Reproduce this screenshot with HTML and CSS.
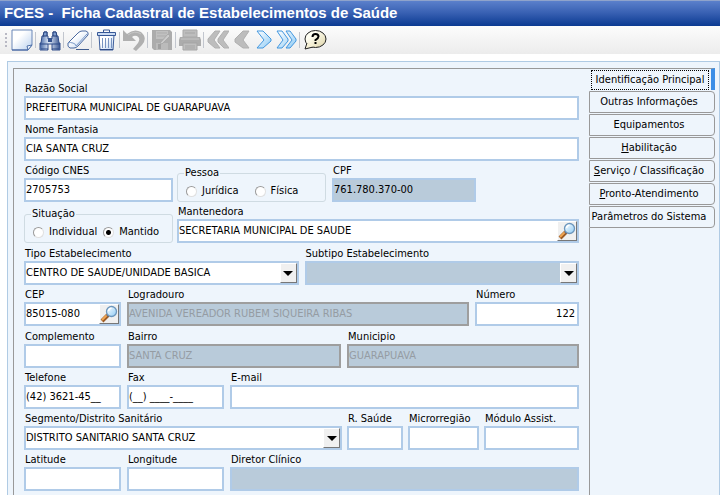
FILE: index.html
```html
<!DOCTYPE html>
<html lang="pt-BR">
<head>
<meta charset="utf-8">
<title>FCES - Ficha Cadastral de Estabelecimentos de Saúde</title>
<link rel="stylesheet" href="styles.css">
</head>
<body>
<svg class="defs" width="0" height="0" aria-hidden="true">
  <defs>
    <linearGradient id="paper" x1="0" y1="0" x2="1" y2="1"><stop offset=".35" stop-color="#fff"/><stop offset="1" stop-color="#b9d0ee"/></linearGradient>
    <linearGradient id="steel" x1="0" y1="0" x2="1" y2="0"><stop offset="0" stop-color="#4567a5"/><stop offset=".45" stop-color="#e4eefb"/><stop offset="1" stop-color="#36538f"/></linearGradient>
    <linearGradient id="cream" x1="0" y1="0" x2="1" y2="1"><stop offset=".3" stop-color="#fffef2"/><stop offset="1" stop-color="#ddd3a6"/></linearGradient>
    <linearGradient id="sky" x1="0" y1="0" x2="1" y2="1"><stop offset="0" stop-color="#fff"/><stop offset="1" stop-color="#8ecbf5"/></linearGradient>
    <symbol id="lens" viewBox="0 0 18 18">
      <path d="M2 16L8 10" stroke="#9b5a24" stroke-width="4"/><path d="M2 15L7 10" stroke="#f0a552" stroke-width="2"/>
      <path d="M7 11L9 9" stroke="#667" stroke-width="2"/>
      <circle cx="11.500" cy="6.500" r="5" fill="url(#sky)" stroke="#6c96bd" stroke-width="1.300"/><path d="M8.500 6q.5-2.500 3-2.700" stroke="#fff" stroke-width="1.500" fill="none"/>
    </symbol>
  </defs>
</svg>
<header class="titlebar"><h1>FCES -&nbsp; Ficha Cadastral de Estabelecimentos de Saúde</h1></header>
<div class="toolbar" role="toolbar" aria-label="Ações">
  <span class="grip"></span>
  <button type="button" aria-label="Novo"><svg viewBox="0 0 22 22"><path d="M1 1h20v15l-4 5H1z" fill="url(#paper)" stroke="#6b87b8"/><path d="M21 16l-5 1 1 4z" fill="#f3f8ff" stroke="#4d6fa8"/><path d="M1 21h16" stroke="#3c5f9e"/></svg></button>
  <i class="sep"></i>
  <button type="button" aria-label="Pesquisar"><svg viewBox="0 0 22 22"><path d="M5 3h3v4h1v3h4V7h1V3h3v4h2l1 7h1v7h-8v-6h-4v6H1v-7h1l1-7h2z" fill="url(#steel)" stroke="#324f8c"/><path d="M5 3h3v4H4zM14 3h3l1 4h-4z" fill="#7d9cce" stroke="#243e78"/><path d="M2 14h6v7H1zM14 14h6l1 7h-7z" fill="url(#steel)"/><path d="M1 15h8M13 15h8M2 20h7M13 20h7" stroke="#2b4987"/><path d="M9 9h4v4H9z" fill="#34528f"/></svg></button>
  <i class="sep"></i>
  <button type="button" aria-label="Apagar"><svg viewBox="0 0 22 22"><path d="M1 14L11 4q2-2 4-2h4q3 1 2 4L11 17q-2 2-4 2H3q-3-1-2-5z" fill="url(#paper)" stroke="#49689f"/><path d="M1 14q2-1 5 0t3 3L20 5" fill="none" stroke="#7c9bca"/><path d="M9 20.500h13" stroke="#405c8f"/></svg></button>
  <i class="sep"></i>
  <button type="button" aria-label="Excluir"><svg viewBox="0 0 22 22"><path d="M4 6h15l-1 15H5z" fill="url(#paper)" stroke="#3f5f9c"/><path d="M2.500 3.500h18v3h-18z" fill="#c9daf2" stroke="#365796"/><path d="M8.500 3V1h6v2" fill="none" stroke="#365796"/><path d="M7.500 9v10M10.500 9v10M13.500 9v10M16.500 9v10" stroke="#7893c1"/><path d="M5 20.500h13" stroke="#2d4a86"/></svg></button>
  <i class="sep"></i>
  <button type="button" aria-label="Desfazer" disabled><svg viewBox="0 0 22 22"><path d="M0 1l4 4q7-6 14-2 7 6 1 13l-6 6-3-2 5-6q3-5-1-7-3-1-5 1l4 4H0z" fill="#b0b0b0"/><path d="M5 6q7-5 13-1" stroke="#c6c6c6" fill="none"/></svg></button>
  <i class="sep"></i>
  <button type="button" aria-label="Salvar" disabled><svg viewBox="0 0 22 22"><path d="M2 1h17l2 2v18H3l-2-2V1z" fill="#acacac"/><path d="M5 2h12v8H5z" fill="#c0c0c0"/><path d="M5 14h12v7H5z" fill="#bbb"/><path d="M7 15h3v5H7z" fill="#a0a0a0"/><path d="M6 4h10M6 7h10" stroke="#adadad"/><path d="M9 14l8-9 2 2-8 8z" fill="#cbcbcb" stroke="#aaa"/></svg></button>
  <i class="sep"></i>
  <button type="button" aria-label="Imprimir" disabled><svg viewBox="0 0 22 22"><path d="M4 1h14v7H4z" fill="#bdbdbd" stroke="#a9a9a9"/><path d="M1 8h20l1 3v6h-4v-3H4v3H0v-6z" fill="#acacac"/><path d="M4 14h14v7H4z" fill="#bebebe" stroke="#a5a5a5"/><path d="M6 4h10M6 17h10M6 19h10" stroke="#a5a5a5"/><path d="M2 10h18" stroke="#c5c5c5"/></svg></button>
  <i class="sep"></i>
  <button type="button" aria-label="Primeiro" disabled><svg viewBox="0 0 22 22"><path d="M8 2h5L7 11l6 8H8L1 13v-3zM17 2h5l-6 9 6 8h-5l-6-6v-3z" fill="#bdbdbd" stroke="#b0b0b0"/></svg></button>
  <button type="button" class="single" aria-label="Anterior" disabled><svg viewBox="0 0 20 22"><path d="M12 2h6l-6 9 6 8h-6l-8-6v-3z" fill="#bdbdbd" stroke="#b0b0b0"/></svg></button>
  <button type="button" class="single" aria-label="Próximo"><svg viewBox="0 0 20 22"><path d="M4 2h6l8 8v2l-8 7H4l7-8z" fill="url(#sky)" stroke="#4397df"/></svg></button>
  <button type="button" aria-label="Último"><svg viewBox="0 0 22 22"><path d="M2 2h5l6 8v2l-6 7H2l6-8zM11 2h4l6 8v2l-6 7h-4l6-8z" fill="url(#sky)" stroke="#4397df"/></svg></button>
  <i class="sep"></i>
  <button type="button" aria-label="Ajuda" class="help"><svg viewBox="0 0 24 22"><ellipse cx="12.500" cy="10" rx="10.500" ry="8.500" fill="url(#cream)" stroke="#222"/><path d="M4 14l-2 6 8-2" fill="#f7f1d6" stroke="#222"/><path d="M5 14l5 3" stroke="#f7f1d6" stroke-width="2"/><path d="M9.500 8q0-3 3-3t3 2.500q0 1.500-3 3.500v1" fill="none" stroke="#000" stroke-width="2"/><path d="M11.500 13h2v2h-2z"/></svg></button>
</div>
<main class="panel">
  <form class="form">
    <div class="group">
      <div class="row"><div class="field"><label for="razao">Razão Social</label><input id="razao" value="PREFEITURA MUNICIPAL DE GUARAPUAVA"></div></div>
      <div class="row"><div class="field"><label for="fantasia">Nome Fantasia</label><input id="fantasia" value="CIA SANTA CRUZ"></div></div>
      <div class="row cols-cnes">
        <div class="field"><label for="cnes">Código CNES</label><input id="cnes" value="2705753"></div>
        <fieldset><legend>Pessoa</legend><div class="radios"><label><input type="radio" name="pessoa">Jurídica</label><label><input type="radio" name="pessoa">Física</label></div></fieldset>
        <div class="field"><label for="cpf">CPF</label><input id="cpf" class="locked" readonly value="761.780.370-00"></div>
      </div>
      <div class="row cols-situacao">
        <fieldset><legend>Situação</legend><div class="radios tight"><label><input type="radio" name="situacao">Individual</label><label><input type="radio" name="situacao" checked>Mantido</label></div></fieldset>
        <div class="field"><label for="mantenedora">Mantenedora</label><div class="box"><input id="mantenedora" value="SECRETARIA MUNICIPAL DE SAUDE"><button type="button" class="lookup" aria-label="Procurar mantenedora"><svg><use href="#lens"/></svg></button></div></div>
      </div>
    </div>
    <div class="group">
      <div class="row cols-tipo">
        <div class="field"><label for="tipo">Tipo Estabelecimento</label><div class="box"><select id="tipo"><option>CENTRO DE SAUDE/UNIDADE BASICA</option></select><span class="arrow"></span></div></div>
        <div class="field"><label for="subtipo">Subtipo Estabelecimento</label><div class="box"><select id="subtipo" class="locked"><option></option></select><span class="arrow"></span></div></div>
      </div>
      <div class="row cols-cep">
        <div class="field"><label for="cep">CEP</label><div class="box"><input id="cep" value="85015-080"><button type="button" class="lookup" aria-label="Procurar CEP"><svg><use href="#lens"/></svg></button></div></div>
        <div class="field"><label for="logradouro">Logradouro</label><input id="logradouro" disabled value="AVENIDA VEREADOR RUBEM SIQUEIRA RIBAS"></div>
        <div class="field"><label for="numero">Número</label><input id="numero" class="number" value="122"></div>
      </div>
    </div>
    <div class="group">
      <div class="row cols-bairro">
        <div class="field"><label for="complemento">Complemento</label><input id="complemento"></div>
        <div class="field"><label for="bairro">Bairro</label><input id="bairro" disabled value="SANTA CRUZ"></div>
        <div class="field"><label for="municipio">Municipio</label><input id="municipio" disabled value="GUARAPUAVA"></div>
      </div>
      <div class="row cols-contato">
        <div class="field"><label for="telefone">Telefone</label><input id="telefone" value="(42) 3621-45__"></div>
        <div class="field"><label for="fax">Fax</label><input id="fax" value="(__) ____-____"></div>
        <div class="field"><label for="email">E-mail</label><input id="email" type="email"></div>
      </div>
      <div class="row cols-segmento">
        <div class="field"><label for="segmento">Segmento/Distrito Sanitário</label><div class="box"><select id="segmento"><option>DISTRITO SANITARIO SANTA CRUZ</option></select><span class="arrow"></span></div></div>
        <div class="field"><label for="rsaude">R. Saúde</label><input id="rsaude"></div>
        <div class="field"><label for="micro">Microrregião</label><input id="micro"></div>
        <div class="field"><label for="modulo">Módulo Assist.</label><input id="modulo"></div>
      </div>
      <div class="row cols-contato">
        <div class="field"><label for="latitude">Latitude</label><input id="latitude"></div>
        <div class="field"><label for="longitude">Longitude</label><input id="longitude"></div>
        <div class="field"><label for="diretor">Diretor Clínico</label><input id="diretor" class="locked" readonly></div>
      </div>
    </div>
  </form>
  <nav class="tabs" aria-label="Seções">
    <button type="button" class="tab current"><span>Identificação Principal</span></button>
    <button type="button" class="tab">Outras Informações</button>
    <button type="button" class="tab">Equipamentos</button>
    <button type="button" class="tab"><u>H</u>abilitação</button>
    <button type="button" class="tab"><u>S</u>erviço / Classificação</button>
    <button type="button" class="tab"><u>P</u>ronto-Atendimento</button>
    <button type="button" class="tab">Parâmetros do Sistema</button>
    <div class="edge"></div>
  </nav>
</main>
</body>
</html>
```
FILE: styles.css
```css
* { box-sizing: border-box; }

body {
  margin: 0;
  background: #fff;
  color: #000;
  font-family: "DejaVu Sans Condensed", "DejaVu Sans", sans-serif;
  font-size: 11px;
}

button, input, select { font: inherit; color: inherit; margin: 0; }

.defs { position: absolute; }

.titlebar {
  height: 26px;
  padding: 0 4px;
  border-top: 1px solid #8fa3cb;
  background: linear-gradient(#5b80cb, #3a62b4 45%, #0b3a92);
}

.titlebar h1 {
  margin: 0;
  color: #fff;
  font-family: "Liberation Sans", sans-serif;
  font-size: 15px;
  line-height: 24px;
  white-space: nowrap;
}

.toolbar {
  display: flex;
  align-items: center;
  height: 28px;
  padding-left: 5px;
  background: linear-gradient(#fcfcfc, #ececec);
}

.toolbar button {
  width: 22px;
  height: 22px;
  padding: 0;
  border: 0;
  background: none;
}

.toolbar button + button { margin-left: 2px; }
.toolbar .single { width: 20px; }
.toolbar .help { width: 24px; }
.toolbar svg { display: block; width: 100%; height: 100%; }

.grip {
  width: 2px;
  height: 14px;
  margin-right: 4px;
  background: repeating-linear-gradient(#b9b9c4 0 2px, transparent 2px 4px);
}

.sep {
  width: 1px;
  height: 16px;
  margin: 0 3px 0 2px;
  background: #c2c6ce;
}

.panel {
  display: flex;
  margin: 7px 0 0 7px;
  padding: 6px 4px 0 5px;
  border: 1px solid #b0cbe4;
  border-bottom: 0;
  background: #eef5fc;
}

.form {
  flex: 1;
  min-width: 0;
  padding: 10px 10px 4px;
  border: solid #999;
  border-width: 1px 0 0 1px;
}

.group + .group { margin-top: 1px; }

.row { display: grid; column-gap: 6px; }
.cols-cnes { grid-template-columns: 149px 151px 144px; column-gap: 4px; }
.cols-situacao { grid-template-columns: 149px 1fr; column-gap: 4px; }
.cols-tipo { grid-template-columns: 1fr 1fr; }
.cols-cep { grid-template-columns: 97px 1fr 104px; }
.cols-bairro { grid-template-columns: 97px 12fr 13fr; }
.cols-contato { grid-template-columns: 97px 97px 1fr; }
.cols-segmento { grid-template-columns: 1fr 56px 71px 95px; column-gap: 5px; }

.field { min-width: 0; }

.field label {
  display: block;
  height: 17px;
  padding-left: 1px;
  line-height: 19px;
  white-space: nowrap;
}

.box { position: relative; }

.field input, .field select {
  display: block;
  width: 100%;
  height: 24px;
  padding: 0 0 2px;
  border: 2px solid #b0cbe8;
  border-radius: 0;
  outline: 0;
  background: #fff;
  appearance: none;
}

.field .locked { background: #b9cbda; }

.field input:disabled {
  border-color: #9e9e9e;
  background: #b9cbda;
  color: #959ca3;
}

.field .number { padding-right: 2px; text-align: right; }

.lookup, .arrow {
  position: absolute;
  top: 2px;
  right: 2px;
  height: 20px;
  border: 1px solid;
  border-color: #fff #777 #777 #fff;
  background: #f0f0f0;
}

.lookup { width: 20px; padding: 0; }
.lookup svg { display: block; width: 18px; height: 18px; }

.arrow {
  display: grid;
  place-items: center;
  width: 17px;
  pointer-events: none;
}

.arrow::before {
  content: "";
  border: 5px solid transparent;
  border-top-color: #000;
  border-bottom: 0;
}

fieldset {
  min-width: 0;
  height: 37px;
  margin: 4px 0 0;
  padding: 0 0 0 8px;
  border: 1px solid #cfdbe2;
  border-radius: 3px;
}

.cols-cnes fieldset { margin-right: 2px; }

legend { margin-left: -2px; padding: 0 1px; line-height: 16px; }

.radios { display: flex; gap: 16px; padding-top: 2px; }
.radios.tight { gap: 6px; }
.radios label { display: flex; align-items: center; gap: 5px; line-height: 16px; }

.radios input {
  width: 11px;
  height: 11px;
  border: 1px solid #d5d9dc;
  border-color: #9a9a9a #e0e0e0 #e0e0e0 #9a9a9a;
  border-radius: 50%;
  background: #fff;
  appearance: none;
}

.radios input:checked { background: radial-gradient(circle, #000 2px, #fff 3px); }

.tabs { display: flex; flex-direction: column; width: 126px; }

.tab {
  height: 22px;
  margin-bottom: 1px;
  padding: 0 6px 0 0;
  border: 1px solid #999;
  border-radius: 0 4px 4px 0;
  background: #eef5fc;
  line-height: 18px;
  white-space: nowrap;
}

.tab.current {
  padding: 0 2px;
  border-width: 1px 4px 0 0;
  border-right-color: #3c8ee6;
  border-radius: 0;
}

.tab.current span { display: block; border: 1px dotted #000; }

.edge { flex: 1; margin-top: -1px; border-left: 1px solid #999; }
```
